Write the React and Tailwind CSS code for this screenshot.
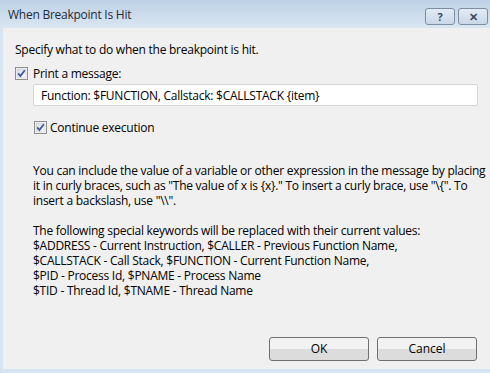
import React from 'react'

function Check() {
  return (
    <svg width="13" height="13" viewBox="0 0 13 13" className="shrink-0">
      <defs>
        <linearGradient id="cbg" x1="0" y1="0" x2="1" y2="1">
          <stop offset="0" stopColor="#d8dbe0" />
          <stop offset="1" stopColor="#fbfbfb" />
        </linearGradient>
      </defs>
      <rect x="0.5" y="0.5" width="12" height="12" fill="#fff" stroke="#8f8f8f" />
      <rect x="2" y="2" width="9" height="9" fill="url(#cbg)" stroke="#c0c4ca" strokeWidth="0.6" />
      <path d="M3.2 6.4 L5.4 9 L9.8 3.2" fill="none" stroke="#3d5a9c" strokeWidth="1.8" />
    </svg>
  )
}

function TitleBtn({ children }) {
  return (
    <div className="w-[30px] h-[17px] rounded-[3px] border border-[#7d8ea3] bg-gradient-to-b from-[#e3ecf5] to-[#c9d7e6] flex items-center justify-center text-[11px] font-bold text-[#3b4a5c] leading-none">
      {children}
    </div>
  )
}

function Button({ children }) {
  return (
    <button className="w-[100px] h-[24px] rounded-[3px] border border-[#707070] bg-gradient-to-b from-[#f2f2f2] from-50% to-[#dcdcdc] to-50% text-[12px] text-black leading-none">
      {children}
    </button>
  )
}

export default function App() {
  return (
    <div className="w-[490px] h-[373px] bg-[#d7e4f2] flex flex-col overflow-hidden tracking-[-0.25px]" style={{ fontFamily: '"Open Sans", "Noto Sans", sans-serif' }}>
      <div className="h-[28px] shrink-0 bg-gradient-to-b from-[#bcd1e6] to-[#dae6f2] flex items-start justify-between pl-[8px] pr-[2px]">
        <span className="text-[12px] text-[#1e2a38] mt-[6px]">When Breakpoint Is Hit</span>
        <div className="flex gap-[3px] mt-[8px] tracking-normal">
          <TitleBtn>?</TitleBtn>
          <TitleBtn>✕</TitleBtn>
        </div>
      </div>
      <div className="flex-1 ml-[3px] mb-[4px] bg-[#f0f0f0] text-[12px] leading-[15px] text-black flex flex-col pl-[12px] pr-[12px] whitespace-nowrap">
        <div className="mt-[14px]">Specify what to do when the breakpoint is hit.</div>
        <div className="mt-[9px] flex items-center gap-[5px]">
          <Check />
          <span>Print a message:</span>
        </div>
        <div className="ml-[18px] mt-[3px] h-[22px] border border-[#d5d5d5] rounded-[2px] bg-white flex items-center px-[7px]">
          Function: $FUNCTION, Callstack: $CALLSTACK {'{item}'}
        </div>
        <div className="ml-[19px] mt-[14px] flex items-center gap-[3px]">
          <Check />
          <span>Continue execution</span>
        </div>
        <div className="ml-[18px] mt-[28px]">
          You can include the value of a variable or other expression in the message by placing<br />
          it in curly braces, such as "The value of x is {'{x}'}." To insert a curly brace, use "\{'{'}". To<br />
          insert a backslash, use "\\".
        </div>
        <div className="ml-[18px] mt-[15px]">
          The following special keywords will be replaced with their current values:<br />
          $ADDRESS - Current Instruction, $CALLER - Previous Function Name,<br />
          $CALLSTACK - Call Stack, $FUNCTION - Current Function Name,<br />
          $PID - Process Id, $PNAME - Process Name<br />
          $TID - Thread Id, $TNAME - Thread Name
        </div>
        <div className="mt-auto mb-[8px] flex justify-end gap-[8px] pr-[1px] tracking-normal">
          <Button>OK</Button>
          <Button>Cancel</Button>
        </div>
      </div>
    </div>
  )
}
